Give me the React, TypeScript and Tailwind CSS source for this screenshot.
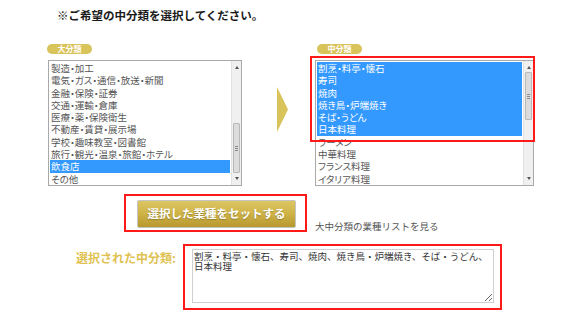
import {type FC} from 'react';

type Item = {label: string; selected?: boolean};

const majorItems: Item[] = [
    {label: '製造・加工'},
    {label: '電気・ガス・通信・放送・新聞'},
    {label: '金融・保険・証券'},
    {label: '交通・運輸・倉庫'},
    {label: '医療・薬・保険衛生'},
    {label: '不動産・賃貸・展示場'},
    {label: '学校・趣味教室・図書館'},
    {label: '旅行・観光・温泉・旅館・ホテル'},
    {label: '飲食店', selected: true},
    {label: 'その他'},
];

const middleItems: Item[] = [
    {label: '割烹・料亭・懐石', selected: true},
    {label: '寿司', selected: true},
    {label: '焼肉', selected: true},
    {label: '焼き鳥・炉端焼き', selected: true},
    {label: 'そば・うどん', selected: true},
    {label: '日本料理', selected: true},
    {label: 'ラーメン'},
    {label: '中華料理'},
    {label: 'フランス料理'},
    {label: 'イタリア料理'},
];

// Pill label above each list
const Pill: FC<{text: string; className?: string}> = ({text, className = ''}) => (
    <div className={`h-[10px] w-[45px] rounded-full bg-[#d9c35b] text-white text-[8px] leading-[10px] font-bold text-center ${className}`}>
        {text}
    </div>
);

// Fake scrollbar, thumb position in px from listbox top
const ScrollBar: FC<{thumbTop: number; thumbHeight: number}> = ({thumbTop, thumbHeight}) => (
    <div className="relative w-[10px] h-full bg-[#f0f0f0] border-l border-[#e2e2e2]">
        <svg className="absolute left-[3px] top-[5px]" width="4" height="3" viewBox="0 0 4 3">
            <path d="M2 0 L4 3 L0 3 Z" fill="#555" />
        </svg>
        <div
            className="absolute left-[1px] w-[7px] rounded-[1px] bg-[#dcdcdc] border border-[#b9b9b9] flex flex-col items-center justify-center gap-[1px]"
            style={{top: thumbTop, height: thumbHeight}}
        >
            <div className="w-[3px] h-px bg-[#8a8a8a]" />
            <div className="w-[3px] h-px bg-[#8a8a8a]" />
            <div className="w-[3px] h-px bg-[#8a8a8a]" />
        </div>
        <svg className="absolute left-[3px] bottom-[5px]" width="4" height="3" viewBox="0 0 4 3">
            <path d="M0 0 L4 0 L2 3 Z" fill="#555" />
        </svg>
    </div>
);

const ListBox: FC<{items: Item[]; width: string; thumbTop: number; thumbHeight: number}> = ({items, width, thumbTop, thumbHeight}) => (
    <div className={`${width} h-[126px] border border-[#a9a9a9] bg-white flex overflow-hidden`}>
        <div className="flex-1 p-[1px] [font-feature-settings:'palt']">
            {items.map((item) => (
                <div
                    key={item.label}
                    className={`h-[12.3px] leading-[12.3px] pl-[1px] text-[9.5px] whitespace-nowrap overflow-hidden ${
                        item.selected ? 'bg-[#3399ff] text-white' : 'text-[#555]'
                    }`}
                >
                    {item.label}
                </div>
            ))}
        </div>
        <ScrollBar thumbTop={thumbTop} thumbHeight={thumbHeight} />
    </div>
);

const App: FC = () => {
    return (
        <div className="w-[570px] h-[314px] bg-white overflow-hidden font-['Noto_Sans_CJK_JP',sans-serif]">
            <div className="pt-[8px] pl-[57px] text-[11.5px] leading-[14px] font-bold text-[#1a1a1a]">
                ※ご希望の中分類を選択してください。
            </div>

            {/* Lists */}
            <div className="mt-[22px] pl-[47px] flex">
                <div className="w-[195px]">
                    <Pill text="大分類" />
                    <ListBox items={majorItems} width="ml-[1px] w-[194px] mt-[6px]" thumbTop={62} thumbHeight={50} />
                </div>
                <div className="w-[73px]">
                    <svg className="ml-[35px] mt-[43px]" width="11" height="45" viewBox="0 0 11 45">
                        <path d="M0 0 L11 22.5 L0 45 Z" fill="#d9c35b" />
                    </svg>
                </div>
                <div className="relative w-[219px]">
                    <Pill text="中分類" className="ml-[2px]" />
                    <ListBox items={middleItems} width="w-[219px] mt-[6px]" thumbTop={11} thumbHeight={48} />
                    <div className="absolute left-[-5px] top-[12px] w-[225px] h-[86px] border-2 border-[#ff1a1a]" />
                </div>
            </div>

            {/* Button row */}
            <div className="mt-[8px] pl-[124px] flex items-end">
                <div className="border-2 border-[#ff1a1a] pl-[11px] pr-[9px] pt-[3px] pb-[2px]">
                    <button className="w-[159px] h-[28px] rounded-[2px] border border-[#c4c4c4] bg-gradient-to-b from-[#dcc662] via-[#ceb246] to-[#b7982f] text-white text-[11.5px] font-bold [text-shadow:0_1px_1px_rgba(0,0,0,0.25)]">
                        選択した業種をセットする
                    </button>
                </div>
                <a className="ml-[8px] text-[9.5px] leading-[12px] text-[#555]">大中分類の業種リストを見る</a>
            </div>

            {/* Selected result */}
            <div className="mt-[12px] pl-[76px] flex items-start">
                <div className="w-[107px] mt-[7px] text-[12px] leading-[14px] font-bold text-[#dfc252]">
                    選択された中分類:
                </div>
                <div className="w-[319px] h-[66px] border-2 border-[#ff1a1a] pl-[7px] pt-[3px]">
                    <textarea
                        readOnly
                        value="割烹・料亭・懐石、寿司、焼肉、焼き鳥・炉端焼き、そば・うどん、日本料理"
                        className="block w-[302px] h-[54px] border border-[#d0d0d0] px-[1px] pt-[1px] text-[9.5px] leading-[10px] text-[#333] resize-y outline-none"
                    />
                </div>
            </div>
        </div>
    );
};

export default App;
